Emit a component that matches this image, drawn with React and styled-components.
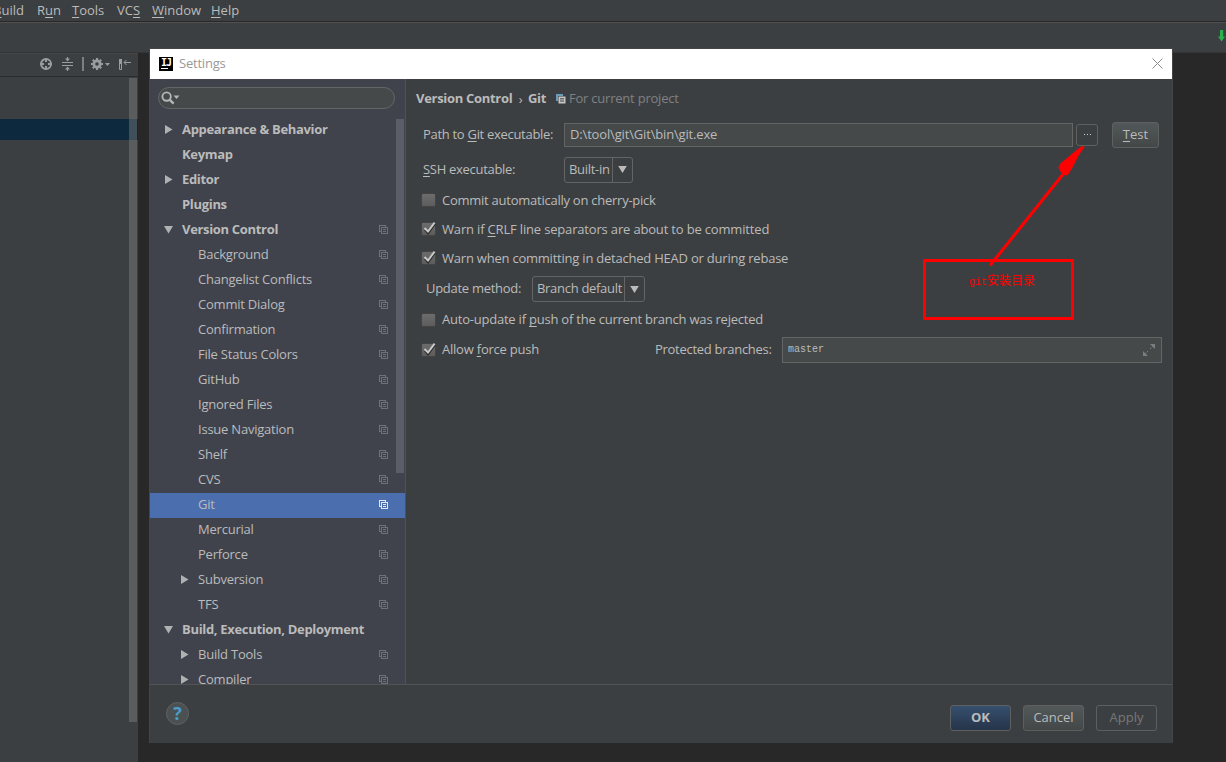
import React from "react";
import styled, { createGlobalStyle } from "styled-components";

const menus = [
    { key: "B", rest: "uild", width: 44 },
    { pre: "R", key: "u", rest: "n", width: 35 },
    { key: "T", rest: "ools", width: 45 },
    { pre: "VC", key: "S", width: 35 },
    { key: "W", rest: "indow", width: 59 },
    { key: "H", rest: "elp", width: 40 },
];

const tree = [
    { label: "Appearance & Behavior", top: true, arrow: "right" },
    { label: "Keymap", top: true },
    { label: "Editor", top: true, arrow: "right" },
    { label: "Plugins", top: true },
    { label: "Version Control", top: true, arrow: "down", copy: true },
    { label: "Background", copy: true },
    { label: "Changelist Conflicts", copy: true },
    { label: "Commit Dialog", copy: true },
    { label: "Confirmation", copy: true },
    { label: "File Status Colors", copy: true },
    { label: "GitHub", copy: true },
    { label: "Ignored Files", copy: true },
    { label: "Issue Navigation", copy: true },
    { label: "Shelf", copy: true },
    { label: "CVS", copy: true },
    { label: "Git", copy: true, selected: true },
    { label: "Mercurial", copy: true },
    { label: "Perforce", copy: true },
    { label: "Subversion", copy: true, arrow: "right" },
    { label: "TFS", copy: true },
    { label: "Build, Execution, Deployment", top: true, arrow: "down" },
    { label: "Build Tools", copy: true, arrow: "right" },
    { label: "Compiler", copy: true, arrow: "right" },
];

const CopyIcon = ({ color = "#6e7176" }) => (
    <svg width="9" height="9" viewBox="0 0 9 9" fill="none" stroke={color} shapeRendering="crispEdges">
        <path d="M2 6.5H0.5V0.5H6.5V2" />
        <path d="M2.5 2.5H8.5V8.5H2.5Z M4 4.5H7 M4 6.5H7" />
    </svg>
);

const Arrow = ({ dir }) => (
    <svg width="9" height="9" viewBox="0 0 9 9" fill="#afb1b3">
        {dir === "right" ? <path d="M1 0L8.5 4.5L1 9Z" /> : <path d="M0 1H9L4.5 8.5Z" />}
    </svg>
);

const Check = ({ checked }) => (
    <Box>
        {checked && (
            <svg width="16" height="16" viewBox="0 0 16 16" fill="none">
                <path d="M4 8.5L7 12L14 2.5" stroke="#2b2b2b" strokeWidth="2.4" />
                <path d="M3.5 7L7 10.5L13.6 1.6" stroke="#c8c8c8" strokeWidth="2" />
            </svg>
        )}
    </Box>
);

const Combo = ({ value, width }) => (
    <ComboWrapper $width={width}>
        <span>{value}</span>
        <ComboButton>
            <svg width="9" height="7" viewBox="0 0 9 7" fill="#bbbbbb">
                <path d="M0.2 0H8.8L4.5 7Z" />
            </svg>
        </ComboButton>
    </ComboWrapper>
);

const App = () => {
    return (
        <Screen>
            <GlobalStyle />
            <MenuBar>
                {menus.map((m) => (
                    <MenuItem key={m.key + m.rest} $width={m.width}>
                        {m.pre}<u>{m.key}</u>{m.rest}
                    </MenuItem>
                ))}
            </MenuBar>
            <Toolbar>
                <svg width="8" height="12" viewBox="0 0 8 12">
                    <path d="M2 0H5.2V6.5H7L3.6 11.5L0 6.5H2Z" fill="#2bb04b" />
                </svg>
            </Toolbar>
            <Workspace>
                <ProjectPanel>
                    <PanelHeader>
                        <svg width="98" height="14" viewBox="0 0 98 14" fill="none" stroke="#9a9c9e">
                            <circle cx="7" cy="7" r="5" strokeWidth="1.9" />
                            <path d="M7 1V5M7 9V13M1 7H5M9 7H13" strokeWidth="1.9" />
                            <path d="M23 5.5H34M23 8.5H34M28.5 0V3M28.5 11V14" />
                            <path d="M26 1.5H31L28.5 4.5ZM26 12.5H31L28.5 9.5Z" fill="#9a9c9e" stroke="none" />
                            <path d="M44 0V14" strokeWidth="1.4" />
                            <circle cx="58" cy="7" r="3.2" strokeWidth="2.8" />
                            <path d="M58 1V3M58 11V13M52 7H54M62 7H64M53.8 2.8L55 4M61 10L62.2 11.2M62.2 2.8L61 4M55 10L53.8 11.2" strokeWidth="2.2" />
                            <path d="M66 6H71L68.5 9Z" fill="#9a9c9e" stroke="none" />
                            <path d="M80.5 2.5H82.5V12.5H80.5Z" />
                            <path d="M80 2H83V7H80Z" fill="#9a9c9e" stroke="none" />
                            <path d="M85 5.5H92M87.5 3L85 5.5L87.5 8" />
                        </svg>
                    </PanelHeader>
                    <PanelBody>
                        <PanelSelection />
                        <PanelScroll />
                    </PanelBody>
                </ProjectPanel>
            </Workspace>

            <Dialog>
                <TitleBar>
                    <Logo>
                        <span>IJ</span>
                    </Logo>
                    <Title>Settings</Title>
                    <svg width="11" height="11" viewBox="0 0 11 11" stroke="#8c8c8c" fill="none">
                        <path d="M0.5 0.5L10.5 10.5M10.5 0.5L0.5 10.5" />
                    </svg>
                </TitleBar>
                <Body>
                    <Sidebar>
                        <Search>
                            <svg width="19" height="14" viewBox="0 0 19 14" fill="none" stroke="#b4b6b8">
                                <circle cx="5.6" cy="5.6" r="4.2" strokeWidth="1.9" />
                                <path d="M8.6 8.6L12.6 12.6" strokeWidth="2.4" />
                                <path d="M12.5 4.5H18.5L15.5 8Z" fill="#b4b6b8" stroke="none" />
                            </svg>
                        </Search>
                        <TreeArea>
                            <Tree>
                                {tree.map((item) => (
                                    <TreeRow key={item.label} $top={item.top} $selected={item.selected}>
                                        <ArrowSlot>{item.arrow && <Arrow dir={item.arrow} />}</ArrowSlot>
                                        <TreeLabel $top={item.top}>{item.label}</TreeLabel>
                                        {item.copy && <CopyIcon color={item.selected ? "#e4e8ee" : undefined} />}
                                    </TreeRow>
                                ))}
                            </Tree>
                            <TreeScroll />
                        </TreeArea>
                    </Sidebar>

                    <Content>
                        <Row $height={39}>
                            <Crumb $width={97}>Version Control</Crumb>
                            <Separator>›</Separator>
                            <Crumb $width={18}>Git</Crumb>
                            <ScopeIcon width="10" height="10" viewBox="0 0 10 10">
                                <path d="M0 0H7V2H2V7H0Z" fill="#6d9cbb" />
                                <path d="M2.5 2.5H9.5V9.5H2.5Z" fill="#c3c5c7" />
                                <path d="M4 4.8H8M4 7H8" stroke="#3c3f41" />
                            </ScopeIcon>
                            <Scope>For current project</Scope>
                        </Row>
                        <Row $height={33} $indent={7}>
                            <Label $width={141} $spacing={-0.3}>Path to <u>G</u>it executable:</Label>
                            <PathField>D:\tool\git\Git\bin\git.exe</PathField>
                            <Browse>
                                <i /><i /><i />
                            </Browse>
                            <Button $width={47}><span><u>T</u>est</span></Button>
                        </Row>
                        <Row $height={37} $indent={7}>
                            <Label $width={141} $spacing={-0.3}><u>S</u>SH executable:</Label>
                            <Combo value="Built-in" width={69} />
                        </Row>
                        <Row $height={25} $indent={5}>
                            <Check />
                            <Label $spacing={-0.25}>Commit automatically on cherry-pick</Label>
                        </Row>
                        <Row $height={33} $indent={5}>
                            <Check checked />
                            <Label $spacing={-0.17}>Warn if <u>C</u>RLF line separators are about to be committed</Label>
                        </Row>
                        <Row $height={25} $indent={5}>
                            <Check checked />
                            <Label>Warn when committing in detached HEAD or during rebase</Label>
                        </Row>
                        <Row $height={36} $indent={10}>
                            <Label $width={106} $spacing={-0.28}>Update method:</Label>
                            <Combo value="Branch default" width={113} />
                        </Row>
                        <Row $height={26} $indent={5}>
                            <Check />
                            <Label>Auto-update if <u>p</u>ush of the current branch was rejected</Label>
                        </Row>
                        <Row $height={34} $indent={5}>
                            <Check checked />
                            <Label $width={213}>Allow <u>f</u>orce push</Label>
                            <Label $width={127} $spacing={-0.28}>Protected branches:</Label>
                            <BranchField>
                                <span>master</span>
                                <svg width="12" height="12" viewBox="0 0 12 12" stroke="#7a7e80" fill="none">
                                    <path d="M7 5L11 1M5 7L1 11" strokeDasharray="2 1" />
                                    <path d="M7 0H12V5ZM0 7L5 12H0Z" fill="#7a7e80" stroke="none" />
                                </svg>
                            </BranchField>
                        </Row>
                    </Content>
                </Body>
                <Footer>
                    <Help>?</Help>
                    <Button $width={61} $primary>OK</Button>
                    <Button $width={61}>Cancel</Button>
                    <Button $width={61} $disabled>Apply</Button>
                </Footer>
            </Dialog>

            <Note><small>git</small>安装目录</Note>
            <Pointer width="104" height="130" viewBox="0 0 104 130">
                <path d="M5 125.5L79 33" stroke="#ff0000" strokeWidth="3" />
                <path
                    d="M96.7 6L88.3 12.7L75.7 23.3L73.3 27.7L75.7 31.7L77.7 34L81 35.7L83.3 34.3L87.7 27.3L93.3 16L99.7 6.7Z"
                    fill="#ff0000"
                />
            </Pointer>
        </Screen>
    );
};

export default App;


const GlobalStyle = createGlobalStyle`
    * {
        box-sizing: border-box;
    }
    body {
        margin: 0;
        overflow: hidden;
        background: #282828;
        color: #bbbbbb;
        font: 13px/18px "Open Sans", "Noto Sans", "Noto Sans CJK SC", sans-serif;
        letter-spacing: -0.22px;
    }
    u {
        text-decoration-thickness: 1px;
        text-underline-offset: 2px;
        text-decoration-skip-ink: none;
    }
    svg {
        display: block;
        flex: none;
    }
`;

const Screen = styled.div`
    position: relative;
    display: flex;
    flex-direction: column;
    width: 1226px;
    height: 762px;
    overflow: hidden;
    white-space: nowrap;
`;

const MenuBar = styled.nav`
    display: flex;
    align-items: center;
    height: 22px;
    margin-left: -7px;
    padding-bottom: 2px;
    background: #3c3f41;
    border-bottom: 1px solid #282828;
`;

const MenuItem = styled.span`
    width: ${({ $width }) => $width}px;
    letter-spacing: 0;
`;

const Toolbar = styled.div`
    display: flex;
    align-items: center;
    justify-content: flex-end;
    height: 31px;
    padding-bottom: 4px;
    background: #3c3f41;
    border-top: 1px solid #515151;
    border-bottom: 1px solid #353535;
`;

const Workspace = styled.div`
    flex: 1;
    display: flex;
`;

const ProjectPanel = styled.aside`
    display: flex;
    flex-direction: column;
    width: 138px;
    background: #3c3f41;
`;

const PanelHeader = styled.div`
    display: flex;
    align-items: center;
    justify-content: flex-end;
    height: 24px;
    padding: 0 1px 2px 0;
    border-bottom: 1px solid #2b2b2b;
    border-top: 1px solid #45484a;
`;

const PanelBody = styled.div`
    position: relative;
    flex: 1;
    padding-top: 42px;
`;

const PanelSelection = styled.div`
    height: 21px;
    background: #0d293e;
`;

const PanelScroll = styled.div`
    position: absolute;
    top: 1px;
    right: 1px;
    width: 8px;
    height: 644px;
    background: rgba(130, 130, 130, 0.44);
`;

const Dialog = styled.section`
    position: absolute;
    left: 149px;
    top: 48px;
    width: 1024px;
    height: 695px;
    display: flex;
    flex-direction: column;
    background: #3c3f41;
    border: 1px solid #454545;
    border-bottom: 0;
`;

const TitleBar = styled.header`
    display: flex;
    align-items: center;
    height: 30px;
    padding: 0 9px 1px 9px;
    background: #ffffff;
`;

const Logo = styled.div`
    width: 14px;
    height: 14px;
    background: #000000;
    color: #ffffff;
    font: bold 10px/11px "DejaVu Sans Mono", monospace;
    & span {
        display: block;
        width: 7px;
        height: 12px;
        margin-left: 2px;
        border-bottom: 1px solid #ffffff;
        letter-spacing: -1px;
    }
`;

const Title = styled.h1`
    flex: 1;
    margin: 0 0 0 6px;
    padding-bottom: 2px;
    color: #999999;
    font-size: 13px;
    font-weight: 400;
`;

const Body = styled.div`
    flex: none;
    display: flex;
    height: 605px;
`;

const Sidebar = styled.aside`
    display: flex;
    flex-direction: column;
    width: 256px;
    padding-top: 8px;
    background: #40434c;
    border-right: 1px solid #4f5254;
`;

const Search = styled.div`
    display: flex;
    align-items: center;
    flex: none;
    width: 237px;
    height: 22px;
    margin-left: 8px;
    padding-left: 2px;
    background: #45494a;
    border: 1px solid #646666;
    border-radius: 11px;
`;

const TreeArea = styled.div`
    position: relative;
    flex: 1;
    min-height: 0;
    margin-top: 9px;
    overflow: hidden;
`;

const Tree = styled.div`
    display: flex;
    flex-direction: column;
`;

const TreeRow = styled.div`
    display: flex;
    align-items: center;
    flex: none;
    height: 25px;
    padding: 0 17px 2px ${({ $top }) => ($top ? 14 : 30)}px;
    background: ${({ $selected }) => ($selected ? "#4b6eaf" : "transparent")};
`;

const ArrowSlot = styled.span`
    width: 18px;
`;

const TreeLabel = styled.span`
    flex: 1;
    padding-bottom: 2px;
    font-weight: ${({ $top }) => ($top ? 700 : 400)};
    letter-spacing: ${({ $top }) => ($top ? -0.32 : -0.22)}px;
`;

const TreeScroll = styled.div`
    position: absolute;
    top: 1px;
    right: 1px;
    width: 8px;
    height: 354px;
    background: #5b5e66;
`;

const Content = styled.main`
    flex: 1;
    padding-left: 10px;
`;

const Row = styled.div`
    display: flex;
    align-items: center;
    height: ${({ $height }) => $height}px;
    padding-left: ${({ $indent }) => $indent || 0}px;
`;

const Crumb = styled.span`
    width: ${({ $width }) => $width}px;
    padding-bottom: 2px;
    font-weight: 700;
    letter-spacing: -0.3px;
`;

const Separator = styled.span`
    width: 15px;
    text-align: center;
`;

const ScopeIcon = styled.svg`
    margin-left: 10px;
`;

const Scope = styled.span`
    margin-left: 3px;
    padding-bottom: 2px;
    color: #7f8182;
`;

const Label = styled.span`
    flex: none;
    width: ${({ $width }) => ($width ? `${$width}px` : "auto")};
    padding-bottom: 2px;
    letter-spacing: ${({ $spacing }) => $spacing || -0.22}px;
`;

const PathField = styled.div`
    width: 509px;
    height: 24px;
    padding: 1px 5px;
    background: #45494a;
    border: 1px solid #646464;
    letter-spacing: -0.16px;
`;

const Browse = styled.div`
    display: flex;
    align-items: center;
    justify-content: center;
    gap: 2px;
    width: 22px;
    height: 22px;
    margin: 0 14px 0 3px;
    border: 1px solid #5e6060;
    border-radius: 3px;
    & i {
        width: 1px;
        height: 1px;
        background: #d0d0d0;
    }
`;

const Button = styled.button`
    display: flex;
    align-items: center;
    justify-content: center;
    width: ${({ $width }) => $width}px;
    height: 26px;
    padding: 0 0 1px;
    border: 1px solid #5e6060;
    border-radius: 3px;
    background: ${({ $primary, $disabled }) =>
        $disabled ? "transparent" : $primary ? "linear-gradient(#364f6e, #253449)" : "linear-gradient(#525859, #434748)"};
    color: ${({ $disabled }) => ($disabled ? "#777777" : "#bbbbbb")};
    font: inherit;
    font-weight: ${({ $primary }) => ($primary ? 700 : 400)};
`;

const ComboWrapper = styled.div`
    display: flex;
    justify-content: space-between;
    width: ${({ $width }) => $width}px;
    height: 26px;
    padding-left: 4px;
    border: 1px solid #646464;
    border-radius: 3px;
    line-height: 23px;
    letter-spacing: -0.3px;
`;

const ComboButton = styled.span`
    display: flex;
    flex: none;
    align-items: center;
    justify-content: center;
    width: 20px;
    padding-right: 1px;
    border-left: 1px solid #646464;
`;

const Box = styled.span`
    position: relative;
    width: 15px;
    height: 14px;
    margin: 0 6px 1px 0;
    background: linear-gradient(#6c6c6c, #5d5d5d);
    border: 1px solid #444444;
    border-radius: 2px;
    & svg {
        position: absolute;
        left: -1px;
        top: -2px;
    }
`;

const BranchField = styled.div`
    display: flex;
    align-items: center;
    justify-content: space-between;
    width: 380px;
    height: 26px;
    padding: 0 6px 0 5px;
    background: #45494a;
    border: 1px solid #646464;
    font: 10px/18px "Liberation Mono", monospace;
    letter-spacing: 0;
`;

const Footer = styled.footer`
    display: flex;
    align-items: center;
    gap: 12px;
    flex: 1;
    padding: 7px 15px 0 16px;
    border-top: 1px solid #515355;
`;

const Help = styled.div`
    width: 23px;
    height: 23px;
    margin: -9px auto 0 0;
    background: #4b5052;
    border: 1px solid #5e6263;
    border-radius: 50%;
    color: #4a9cc9;
    font: bold 18px/21px "Open Sans", sans-serif;
    text-align: center;
`;

const Note = styled.div`
    position: absolute;
    left: 923px;
    top: 259px;
    width: 151px;
    height: 61px;
    padding: 11px 0 0 43px;
    border: 3px solid #ff0000;
    color: #ff0000;
    font: 12px/18px "Liberation Mono", "Noto Sans CJK SC", monospace;
    letter-spacing: 0;
    & small {
        font-size: 10px;
    }
`;

const Pointer = styled.svg`
    position: absolute;
    left: 985px;
    top: 140px;
`;
